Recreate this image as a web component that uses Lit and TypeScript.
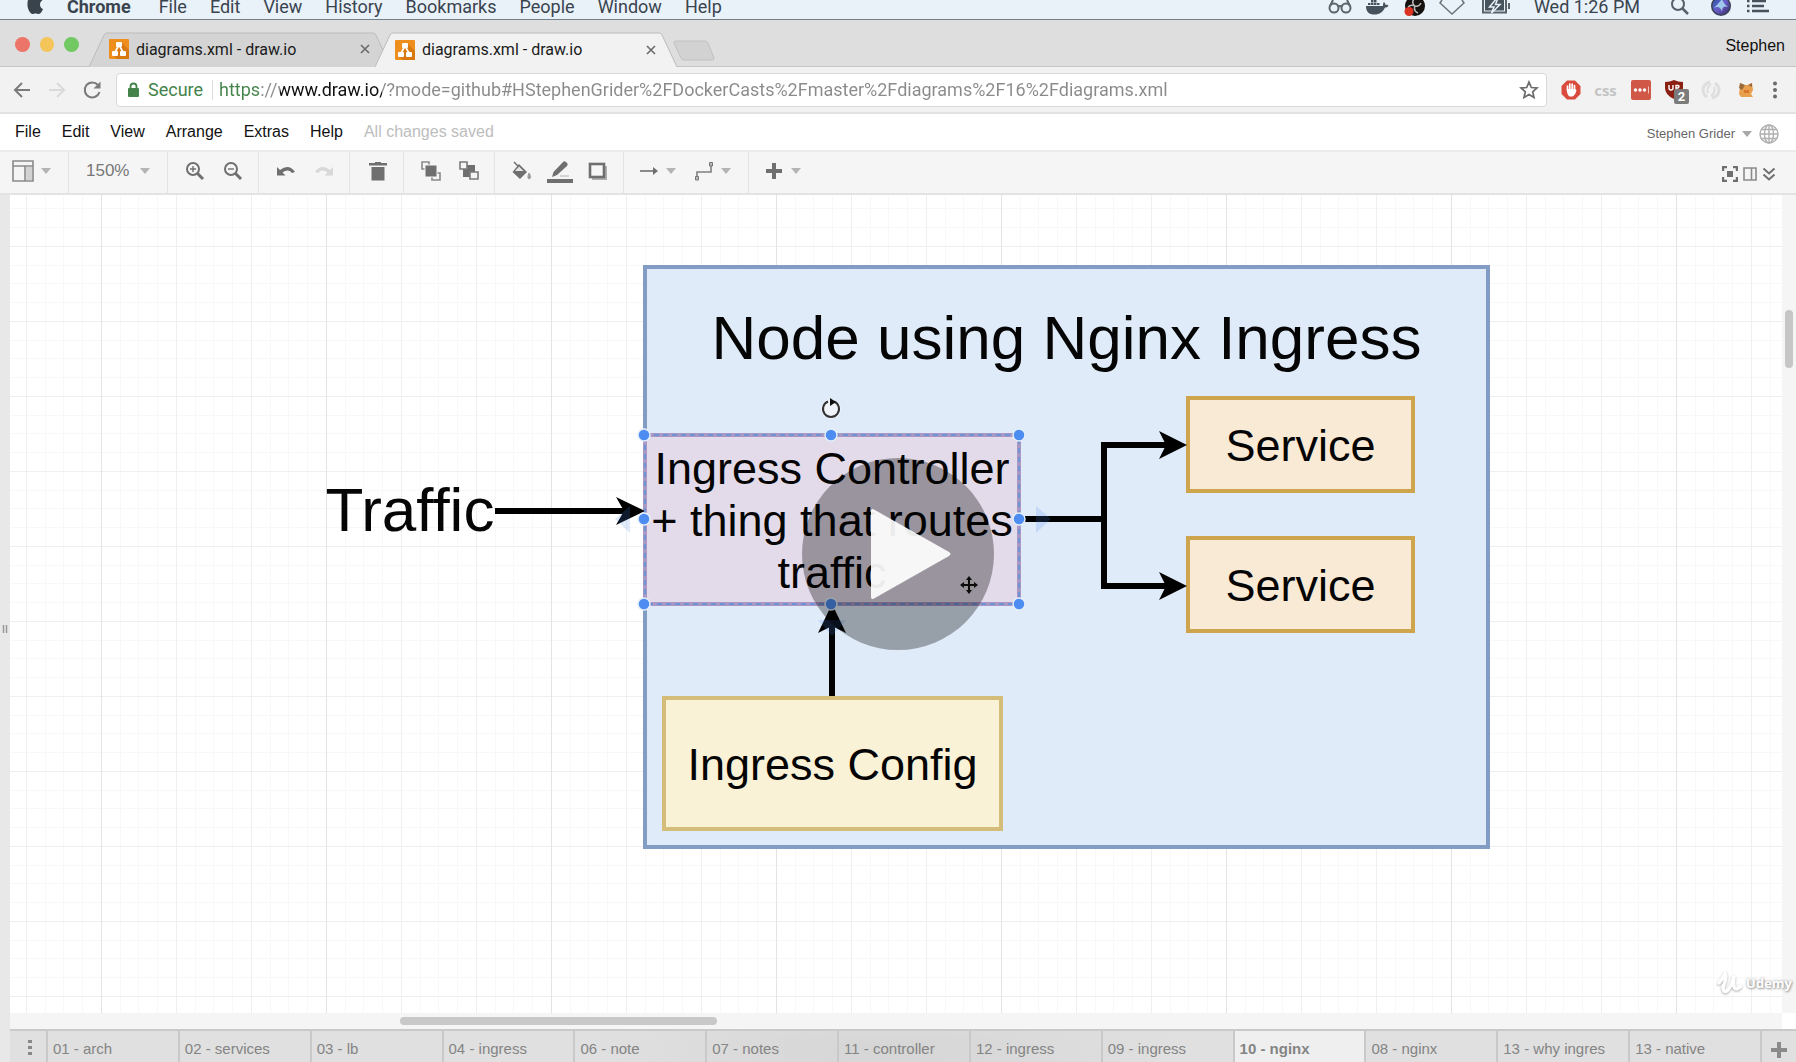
import { LitElement, html, svg, css } from "lit";
import { customElement, property, state } from "lit/decorators.js";
import { classMap } from "lit/directives/class-map.js";
import { styleMap } from "lit/directives/style-map.js";

const caret = html`<svg class="caret" width="10" height="6" viewBox="0 0 10 6" aria-hidden="true"><path d="M0 0H10L5 6Z" fill="currentColor" /></svg>`;

const favicon = html`<svg width="20" height="20" viewBox="0 0 20 20" aria-hidden="true">
  <rect width="20" height="20" rx="1" fill="#ee8e1c" />
  <path d="M13 4L20 11V20H8L5 17L10 9Z" fill="#d9780f" />
  <path d="M10 6L5.500 14M10 6L14.500 14" stroke="#fff" stroke-width="1.600" />
  <rect x="7" y="3" width="6" height="5" rx="1" fill="#fff" />
  <rect x="3" y="12" width="6" height="5" rx="1" fill="#fff" />
  <rect x="11" y="12" width="6" height="5" rx="1" fill="#fff" />
</svg>`;

@customElement("mac-menu-bar")
class MacMenuBar extends LitElement {
  static styles = css`
    :host {
      display: flex;
      justify-content: space-between;
      align-items: flex-start;
      height: 19px;
      overflow: hidden;
      background: #e9f1f9;
      border-bottom: 1px solid #74818b;
      color: #3a444e;
      font: 18px/14px Roboto, sans-serif;
    }
    .menus { display: flex; align-items: flex-start; gap: 23px; padding-left: 27px; }
    .status { display: flex; align-items: flex-start; gap: 13px; padding-right: 26px; }
    button { all: unset; white-space: nowrap; }
    .app { font-weight: 700; margin-right: 5px; }
    svg { display: block; }
    .battery { margin-left: 3px; }
    .clock { padding: 0 17px 0 10px; white-space: nowrap; }
    .siri { margin: 0 2px 0 8px; }
  `;
  render() {
    return html`
      <nav class="menus" aria-label="System menu">
        <svg width="17" height="15" viewBox="0 0 17 15" aria-hidden="true">
          <path d="M1 0H15.500C13.500 1.500 13 3 13 4.500C13 7 14.500 8.500 16 9C15 12 13 14 11.500 14C10.500 14 10 13.400 8.500 13.400C7 13.400 6.500 14 5.500 14C3.500 14 0.500 9.500 0.500 5C0.500 3 0.500 1.500 1 0Z" fill="#39434c" />
        </svg>
        <button class="app">Chrome</button>
        ${["File", "Edit", "View", "History", "Bookmarks", "People", "Window", "Help"].map((m) => html`<button>${m}</button>`)}
      </nav>
      <div class="status">
        <svg width="24" height="15" viewBox="0 0 24 15" fill="none" stroke="#5b656d" stroke-width="2" aria-hidden="true">
          <circle cx="6" cy="8" r="4.500" /><circle cx="18" cy="8" r="4.500" /><path d="M10 7Q12 5 14 7M2 6L5 0M22 6L19 0" />
        </svg>
        <svg width="24" height="16" viewBox="0 0 24 16" fill="#46525c" aria-hidden="true">
          <path d="M1 6H18C18 4 18 3 19 2C20 3 20.500 4 20.500 5C21.500 4.500 23 5 23.500 5.500C23 7 21.500 7.500 20 7.500C18 12 14.500 14.500 9.500 14.500C4 14.500 1 12 1 6Z" />
          <path d="M3 3H5.500V5H3ZM6 3H8.500V5H6ZM9 3H11.500V5H9ZM12 3H14.500V5H12ZM6 0H8.500V2.500H6ZM9 0H11.500V2.500H9Z" />
        </svg>
        <svg width="24" height="17" viewBox="0 0 24 17" aria-hidden="true">
          <circle cx="13" cy="6" r="10" fill="#14110f" />
          <path d="M12 -1Q9 3 13 6Q17 7 19 3M13 6Q11 11 16 13M13 6Q9 4 6 7" stroke="#b9b9b9" stroke-width="1.500" fill="none" />
          <circle cx="7" cy="11.500" r="4.500" fill="#dd3323" />
        </svg>
        <svg width="26" height="16" viewBox="0 0 26 16" aria-hidden="true"><path d="M3 0L1 3L13 14L25 3L23 0" fill="none" stroke="#6a747c" stroke-width="1.500" /></svg>
        <svg class="battery" width="30" height="16" viewBox="0 0 30 16" aria-hidden="true">
          <path d="M2 0V12.500H25V0M28 3V9" stroke="#58636c" stroke-width="2" fill="none" />
          <path d="M4 0H23V10.500H4Z" fill="#46525c" />
          <path d="M16 -2L8.500 7H13L10.500 13L19 4.500H14.500L17 -2Z" fill="#46525c" stroke="#e9f1f9" stroke-width="1.500" />
        </svg>
        <span class="clock">Wed 1:26 PM</span>
        <svg width="20" height="16" viewBox="0 0 20 16" aria-hidden="true"><circle cx="8" cy="4" r="6" fill="none" stroke="#56606a" stroke-width="2" /><path d="M12.500 8.500L18 14" stroke="#56606a" stroke-width="2.500" /></svg>
        <svg class="siri" width="20" height="17" viewBox="0 0 20 17" aria-hidden="true">
          <defs><linearGradient id="s" x1="0" x2="1" y1="0" y2="1"><stop offset="0" stop-color="#2558a8" /><stop offset=".5" stop-color="#6a5cc8" /><stop offset="1" stop-color="#3a2c68" /></linearGradient></defs>
          <circle cx="10" cy="6" r="10" fill="#3c4257" /><circle cx="10" cy="6" r="8.500" fill="url(#s)" />
          <path d="M3 8Q8 3 11 -1Q12 3 17 7Q11 5 11 12Q9 5 3 8Z" fill="#a9dcf2" opacity=".85" />
        </svg>
        <svg width="24" height="14" viewBox="0 0 24 14" aria-hidden="true"><path d="M1 1H3.500M1 6H3.500M1 11H3.500M6 1H20M6 6H18M6 11H23" stroke="#46525c" stroke-width="2.500" /></svg>
      </div>
    `;
  }
}

@customElement("browser-chrome")
class BrowserChrome extends LitElement {
  @property() address = "";
  static styles = css`
    :host { display: block; font-family: Roboto, sans-serif; background: #dedede; }
    button { all: unset; display: flex; align-items: center; justify-content: center; }
    svg { display: block; flex: none; }
    .strip { display: flex; align-items: center; height: 46px; border-bottom: 1px solid #c6c6c6; padding-right: 11px; }
    .lights { display: flex; gap: 10px; padding: 2px 10px 0 15px; width: 64px; }
    .light { width: 15px; height: 15px; border-radius: 50%; }
    .red { background: #ec7468; }
    .amber { background: #f4c558; }
    .green { background: #72c963; }
    .tab {
      position: relative; display: flex; align-items: center; gap: 7px;
      box-sizing: border-box; width: 302px; height: 35px; margin: 12px -16px 0 0; padding: 0 20px;
      font-size: 16px; color: #1b1b1b;
    }
    .tab.active { z-index: 1; margin-bottom: -1px; }
    .shape { position: absolute; inset: 0; width: 100%; height: 100%; }
    .tab > :not(.shape) { position: relative; }
    .title { flex: 1; white-space: nowrap; }
    .newtab { margin: 16px auto 0 12px; }
    .profile { font: 16px "Liberation Sans", sans-serif; color: #111; padding-top: 5px; }
    .bar { display: flex; align-items: center; height: 45px; background: #f2f2f2; border-bottom: 2px solid #e2e2e2; padding-right: 9px; }
    .nav { display: flex; gap: 15px; padding: 0 14px 0 12px; }
    .box {
      flex: 1; min-width: 0; display: flex; align-items: center; height: 32px; margin-right: 6px; padding: 0 7px 0 10px;
      background: #fff; border: 1px solid #d9d9d9; border-radius: 4px;
    }
    .secure { color: #44834a; font-size: 18px; padding: 0 9px 0 8px; border-right: 1px solid #dcdcdc; line-height: 20px; }
    label { flex: 1; display: flex; }
    input {
      flex: 1; min-width: 0; border: 0; outline: 0; padding: 0 0 0 6px; font: 18px/24px Roboto, sans-serif;
      background-image: linear-gradient(90deg, #44834a 0 48px, #8a8a8a 48px 67px, #111 67px 169px, #8a8a8a 169px);
      background-clip: text; -webkit-background-clip: text; color: transparent;
    }
    .ext { width: 35px; height: 34px; }
    .dots { width: 24px; height: 34px; }
    .css { font: 700 15px "Open Sans", sans-serif; color: #c4c4c4; }
  `;
  private tab(active: boolean) {
    return html`<div class=${classMap({ tab: true, active })} role="tab" aria-selected=${active}>
      <svg class="shape" viewBox="0 0 302 35" preserveAspectRatio="none" aria-hidden="true">
        <path d="M0 35L15 3Q16 1 18 1H284Q286 1 287 3L302 35Z" fill=${active ? "#f2f2f2" : "#d4d4d4"} />
        <path d="M0 35L15 3Q16 1 18 1H284Q286 1 287 3L302 35" fill="none" stroke="#bcbcbc" />
      </svg>
      ${favicon}<span class="title">diagrams.xml - draw.io</span>
      <button aria-label="Close tab"><svg width="12" height="12" viewBox="0 0 12 12"><path d="M2 2L10 10M10 2L2 10" stroke="#6a6a6a" stroke-width="1.600" /></svg></button>
    </div>`;
  }
  render() {
    return html`
      <div class="strip">
        <div class="lights"><span class="light red"></span><span class="light amber"></span><span class="light green"></span></div>
        ${this.tab(false)}${this.tab(true)}
        <button class="newtab" aria-label="New tab"><svg width="42" height="22" viewBox="0 0 42 22"><path d="M3 1H32Q34 1 35 3L41 18Q41 20 39 20H11Q9 20 8 18L1 3Q1 1 3 1Z" fill="#d2d2d2" stroke="#c0c0c0" /></svg></button>
        <span class="profile">Stephen</span>
      </div>
      <div class="bar">
        <div class="nav">
          <button aria-label="Back"><svg width="20" height="20" viewBox="0 0 20 20" fill="none" stroke="#7b7b7b" stroke-width="2"><path d="M18 10H3M10 3L3 10L10 17" /></svg></button>
          <button aria-label="Forward"><svg width="20" height="20" viewBox="0 0 20 20" fill="none" stroke="#dadada" stroke-width="2"><path d="M2 10H17M10 3L17 10L10 17" /></svg></button>
          <button aria-label="Reload"><svg width="20" height="20" viewBox="0 0 20 20"><path d="M16 5A7.500 7.500 0 1 0 17.500 12" fill="none" stroke="#7b7b7b" stroke-width="2" /><path d="M18.500 1.500V8.500H11.500Z" fill="#7b7b7b" /></svg></button>
        </div>
        <div class="box">
          <svg width="13" height="16" viewBox="0 0 13 16"><rect x="1" y="6" width="11" height="9" rx="1" fill="#44834a" /><path d="M3.500 7V4.500A3 3 0 0 1 9.500 4.500V7" fill="none" stroke="#44834a" stroke-width="1.800" /></svg>
          <span class="secure">Secure</span>
          <label><input aria-label="Address" .value=${this.address} spellcheck="false" /></label>
          <button aria-label="Bookmark"><svg width="20" height="20" viewBox="0 0 20 20"><path d="M10 2L12.300 7.500L18 8L13.700 11.800L15 17.500L10 14.500L5 17.500L6.300 11.800L2 8L7.700 7.500Z" fill="none" stroke="#6b6b6b" stroke-width="1.700" /></svg></button>
        </div>
        <button class="ext" aria-label="AdBlock"><svg width="20" height="20" viewBox="0 0 20 20"><path d="M6 0.500H14L19.500 6V14L14 19.500H6L0.500 14V6Z" fill="#d94c3d" /><path d="M6.500 10V6M8.800 10V4M11.200 10V4M13.500 10V5.500" stroke="#fff" stroke-width="1.700" stroke-linecap="round" /><path d="M5.700 9H14.300L15.500 10.500Q14 15.500 11.500 16.500H8.500Q6 15 5.700 9Z" fill="#fff" /></svg></button>
        <button class="ext css">css</button>
        <button class="ext" aria-label="Password manager"><svg width="20" height="20" viewBox="0 0 20 20"><rect width="20" height="20" rx="2" fill="#cf5847" /><circle cx="4.500" cy="10" r="1.700" fill="#fff" /><circle cx="9" cy="10" r="1.700" fill="#fff" /><circle cx="13.500" cy="10" r="1.700" fill="#fff" /><path d="M17.500 6.500V13.500" stroke="#f2c4bd" /></svg></button>
        <button class="ext" aria-label="uBlock"><svg width="26" height="28" viewBox="0 0 26 28"><path d="M2 6Q7 6 11 4Q15 6 20 6V12Q20 19 11 23Q2 19 2 12Z" fill="#8c1f14" /><path d="M6 9V12Q6 14 8 14Q10 14 10 12V9M13 15V9.500H15Q17 10 15 12H13" fill="none" stroke="#fff" stroke-width="1.400" /><rect x="11" y="13" width="15" height="15" rx="2" fill="#7b7b7b" /><text x="18.500" y="25" text-anchor="middle" font-family="Roboto" font-weight="700" font-size="13" fill="#fff">2</text></svg></button>
        <button class="ext" aria-label="Extension"><svg width="22" height="20" viewBox="0 0 22 20" fill="none" stroke="#dedede"><path d="M10 2Q3 4 3 10Q3 14 7 17M12 18Q19 16 19 10Q19 6 15 3" stroke-width="3" /><path d="M11 4Q6 8 8 13M11 16Q16 12 14 7" stroke-width="2" /></svg></button>
        <button class="ext" aria-label="Extension"><svg width="18" height="18" viewBox="0 0 18 18"><path d="M3 2L7 4H11L15 2L16 9L14 13L16 16H4L2 13Q3 8 3 2Z" fill="#e9a04c" /><path d="M3 2L8 4L5 9L2 7ZM11 4L15 2V6Z" fill="#9a6a3c" /><path d="M7 9H12V12H7Z" fill="#d6792a" /></svg></button>
        <button class="dots" aria-label="Menu"><svg width="6" height="18" viewBox="0 0 6 18" fill="#6b6b6b"><circle cx="3" cy="2.500" r="2" /><circle cx="3" cy="9" r="2" /><circle cx="3" cy="15.500" r="2" /></svg></button>
      </div>
    `;
  }
}

const icon = (w: number, h: number, body: unknown) =>
  html`<svg width=${w} height=${h} viewBox="0 0 ${w} ${h}" aria-hidden="true">${body}</svg>`;

const G = "#6f6f6f";
const icons = {
  sidebar: icon(22, 22, svg`<path d="M1 1H21V21H1ZM1 6H21M13 6V21" fill="none" stroke="#8a8a8a" stroke-width="1.600"/><rect x="14" y="7" width="6" height="13" fill="#d2d2d2"/>`),
  zoomIn: icon(20, 20, svg`<circle cx="8" cy="8" r="6" fill="none" stroke=${G} stroke-width="2"/><path d="M8 5V11M5 8H11" stroke=${G} stroke-width="1.400"/><path d="M12.500 12.500L18 18" stroke=${G} stroke-width="3"/>`),
  zoomOut: icon(20, 20, svg`<circle cx="8" cy="8" r="6" fill="none" stroke=${G} stroke-width="2"/><path d="M5 8H11" stroke=${G} stroke-width="1.400"/><path d="M12.500 12.500L18 18" stroke=${G} stroke-width="3"/>`),
  undo: icon(20, 16, svg`<path d="M1 4V12.500H9.500L6.500 9.500Q12 5.500 16 10L19 9Q13 0 4 7Z" fill=${G}/>`),
  redo: icon(20, 16, svg`<path d="M19 4V12.500H10.500L13.500 9.500Q8 5.500 4 10L1 9Q7 0 16 7Z" fill="#d8d8d8"/>`),
  trash: icon(20, 20, svg`<path d="M1 2H7V1H13V2H19V4.500H1ZM3.500 6H16.500V19.500H3.500Z" fill=${G}/>`),
  front: icon(22, 20, svg`<path d="M2 1H9V8H2ZM12 12H20V19H12Z" fill="none" stroke="#8a8a8a" stroke-width="1.600"/><rect x="5" y="4" width="12" height="12" fill=${G} stroke="#f5f5f5"/>`),
  back: icon(22, 20, svg`<rect x="5" y="4" width="12" height="12" fill=${G}/><path d="M2 1H9V8H2ZM12 11H20V18H12Z" fill="#f5f5f5" stroke="#7a7a7a" stroke-width="1.600"/>`),
  fill: icon(22, 20, svg`<path d="M3 1L8 6" stroke=${G} stroke-width="1.500"/><path d="M8 3L16 11L9 18L1.500 11Z" fill=${G}/><path d="M8 5.500L12.500 10H4Z" fill="#e5e5e5"/><path d="M18 12Q21 16 18.500 18Q15.500 17.500 18 12Z" fill="#9b9b9b" stroke="#9b9b9b"/>`),
  line: icon(28, 24, svg`<path d="M6 18L7.500 13L17 3Q18 1.500 20 3L21.500 4.500Q22 6 21 7L11 16Z" fill=${G}/><path d="M14 17H23" stroke="#c8c8c8" stroke-width="1.500"/><rect x="1" y="20" width="26" height="4" fill=${G}/>`),
  shadow: icon(20, 20, svg`<rect x="4" y="5" width="15" height="14" fill="#b0b0b0"/><rect x="2" y="3" width="14" height="13" fill="#f7f7f7" stroke=${G} stroke-width="2.600"/>`),
  arrow: icon(20, 20, svg`<path d="M1 10H15" stroke=${G} stroke-width="1.600"/><path d="M14 6L19 10L14 14Z" fill=${G}/>`),
  elbow: icon(20, 20, svg`<path d="M3 17V11H17V4" fill="none" stroke="#808080" stroke-width="1.600"/><path d="M1.500 15.500H4.500V19H1.500ZM15.500 1.500H18.500V5H15.500Z" fill="#bbb" stroke="#777"/>`),
  plus: icon(20, 20, svg`<path d="M10 2V18M2 10H18" stroke=${G} stroke-width="4"/>`),
};

@customElement("editor-header")
class EditorHeader extends LitElement {
  static styles = css`
    :host { display: block; font: 16px "Liberation Sans", Arial, sans-serif; }
    button { all: unset; display: flex; align-items: center; justify-content: center; white-space: nowrap; }
    svg { display: block; flex: none; }
    .menus { display: flex; align-items: center; height: 36px; padding: 0 17px 0 15px; gap: 21px; background: #fff; border-bottom: 2px solid #ebebeb; color: #111; }
    .saved { color: #bdbdbd; }
    .user { margin-left: auto; display: flex; align-items: center; gap: 7px; font-size: 13px; color: #666; padding-top: 3px; }
    .user button { gap: 7px; }
    .user .caret { color: #a8a8a8; }
    .tools { display: flex; height: 41px; background: #f5f5f5; border-bottom: 2px solid #e3e3e3; padding-right: 20px; }
    .group { display: flex; align-items: center; padding: 0 6px 4px 8px; border-right: 1px solid #e4e4e4; }
    .group:first-child { padding: 0 8px 4px 5px; }
    .group.last { border-right: 0; }
    .tool { width: 38px; height: 34px; }
    .tool.lone { width: 39px; }
    .drop { justify-content: flex-start; box-sizing: border-box; width: 55px; height: 34px; padding-left: 7px; gap: 7px; }
    .caret { color: #b4b4b4; }
    .zoom { display: flex; align-items: center; padding: 0 11px 0 9px; }
    select { appearance: none; border: 0; background: none; padding: 0; width: 54px; font: inherit; font-size: 17px; color: #777; outline: 0; }
    .view { margin-left: auto; display: flex; align-items: center; gap: 5px; padding-top: 2px; }
  `;
  render() {
    const tool = (label: string, i: unknown, lone = false) => html`<button class=${classMap({ tool: true, lone })} aria-label=${label}>${i}</button>`;
    const drop = (label: string, i: unknown) => html`<button class="drop" aria-label=${label}>${i}${caret}</button>`;
    return html`
      <nav class="menus" aria-label="Editor menu">
        ${["File", "Edit", "View", "Arrange", "Extras", "Help"].map((m) => html`<button>${m}</button>`)}
        <span class="saved">All changes saved</span>
        <div class="user">
          <button>Stephen Grider ${caret}</button>
          <button aria-label="Language">
            <svg width="20" height="20" viewBox="0 0 20 20" fill="none" stroke="#b0b0b0" stroke-width="1.400"><circle cx="10" cy="10" r="9" /><ellipse cx="10" cy="10" rx="4.500" ry="9" /><path d="M10 1V19M1 10H19M2.500 5.500H17.500M2.500 14.500H17.500" /></svg>
          </button>
        </div>
      </nav>
      <div class="tools" role="toolbar">
        <div class="group">${drop("Panels", icons.sidebar)}</div>
        <div class="group"><label class="zoom"><select aria-label="Zoom"><option>150%</option></select>${caret}</label></div>
        <div class="group">${tool("Zoom in", icons.zoomIn)}${tool("Zoom out", icons.zoomOut)}</div>
        <div class="group">${tool("Undo", icons.undo)}${tool("Redo", icons.redo)}</div>
        <div class="group">${tool("Delete", icons.trash, true)}</div>
        <div class="group">${tool("To front", icons.front)}${tool("To back", icons.back)}</div>
        <div class="group">${tool("Fill colour", icons.fill)}${tool("Line colour", icons.line)}${tool("Shadow", icons.shadow)}</div>
        <div class="group">${drop("Connection", icons.arrow)}${drop("Waypoints", icons.elbow)}</div>
        <div class="group last">${drop("Insert", icons.plus)}</div>
        <div class="view">
          <button aria-label="Fullscreen"><svg width="16" height="16" viewBox="0 0 16 16"><path d="M1 5V1H5M11 1H15V5M15 11V15H11M5 15H1V11" fill="none" stroke=${G} stroke-width="2.400" /><rect x="5" y="5" width="6" height="6" fill=${G} /></svg></button>
          <button aria-label="Format panel"><svg width="14" height="14" viewBox="0 0 14 14"><path d="M1 1H13V13H1ZM8.500 1V13" fill="none" stroke="#8a8a8a" stroke-width="1.600" /></svg></button>
          <button aria-label="Collapse"><svg width="14" height="14" viewBox="0 0 14 14"><path d="M1.500 1.500L7 6.500L12.500 1.500M1.500 7.500L7 12.500L12.500 7.500" fill="none" stroke=${G} stroke-width="2" /></svg></button>
        </div>
      </div>
    `;
  }
}

interface DiagramNode { text: string; x: number; y: number; w: number; h: number; kind: string }

const nodes: DiagramNode[] = [
  { text: "Node using Nginx Ingress", x: 633, y: 70, w: 847, h: 584, kind: "host" },
  { text: "Traffic", x: 314, y: 279, w: 172, h: 72, kind: "label" },
  { text: "Service", x: 1176, y: 201, w: 229, h: 97, kind: "service" },
  { text: "Service", x: 1176, y: 341, w: 229, h: 97, kind: "service" },
  { text: "Ingress Config", x: 652, y: 501, w: 341, h: 135, kind: "config" },
  { text: "Ingress Controller + thing that routes traffic", x: 633, y: 238, w: 378, h: 173, kind: "controller" },
];

const handles = [634, 821, 1009].flatMap((x) => [240, 324, 409].map((y) => ({ x, y }))).filter((p) => !(p.x === 821 && p.y === 324));

@customElement("diagram-canvas")
class DiagramCanvas extends LitElement {
  static styles = css`
    :host { display: block; position: relative; overflow: hidden; background: #fff; }
    .grid, .edges { position: absolute; inset: 0; width: 100%; height: 100%; }
    .node {
      position: absolute; box-sizing: border-box; display: flex; align-items: center; justify-content: center; padding-top: 3px;
      text-align: center; color: #050505; font: 45px/52px "Liberation Sans", Arial, sans-serif; border: 4px solid;
    }
    .host { align-items: flex-start; padding-top: 33px; font-size: 62px; line-height: 72px; background: #dfebf9; border-color: #839cc3; }
    .label { border: 0; padding-top: 0; font-size: 62px; line-height: 72px; }
    .service { background: #f9ead6; border-color: #cea54c; }
    .config { background: #faf2d6; border-color: #d3bd79; }
    .controller { background: #e3dbea; border-color: #aa98c4; }
    .label, .host { white-space: nowrap; }
  `;
  render() {
    return html`
      <svg class="grid" aria-hidden="true">
        <defs>
          <pattern id="g" width="225" height="75" x="16" y="51" patternUnits="userSpaceOnUse">
            <path d="M19.500 0V75M37.500 0V75M56.500 0V75M94.500 0V75M112.500 0V75M131.500 0V75M169.500 0V75M187.500 0V75M206.500 0V75M0 19.500H225M0 37.500H225M0 56.500H225" stroke="#f8f8f8" />
            <path d="M0.500 0V75M150.500 0V75M0 0.500H225" stroke="#efefef" />
            <path d="M75.500 0V75" stroke="#e4e4e4" />
          </pattern>
        </defs>
        <rect width="100%" height="100%" fill="url(#g)" />
      </svg>
      ${nodes.map((n) => html`<div class="node ${n.kind}" style=${styleMap({ left: `${n.x}px`, top: `${n.y}px`, width: `${n.w}px`, height: `${n.h}px` })}>${n.text}</div>`)}
      <svg class="edges" aria-hidden="true">
        <g fill="none" stroke="#000" stroke-width="6">
          <path d="M485 316H616M1010 324H1094M1156 250H1094V391H1156M822 501V428" />
        </g>
        <path d="M635 316L606 302L614 316L606 330ZM1177 250L1149 236L1156 250L1149 264ZM1177 391L1149 377L1156 391L1149 405ZM822 409L808 438L822 431L836 438Z" fill="#000" />
        <g fill="#4d8cf0">
          <path d="M620 311V338L605 324ZM1026 311V338L1041 324ZM808 425H836L822 441Z" opacity=".18" />
          <rect x="635" y="240" width="374" height="169" fill="none" stroke="#6f93d4" stroke-width="2" stroke-dasharray="5 4" />
          ${handles.map((p) => svg`<circle cx=${p.x} cy=${p.y} r="6" stroke="#e4eefb" stroke-width="1.500" />`)}
        </g>
        <circle cx="821" cy="214" r="10" fill="#f4f6f8" opacity=".8" />
        <path d="M824 206.500A8 8 0 1 1 818 206.500" fill="none" stroke="#333" stroke-width="2" />
        <path d="M820 203L826 207L820 211Z" fill="#111" />
        <path d="M959 380L969 390L959 400L949 390Z" fill="#d5d5d5" opacity=".55" />
        <path d="M959 384V396M953 390H965" stroke="#111" stroke-width="2" />
        <path d="M959 381L962 385H956ZM959 399L962 395H956ZM950 390L954 387V393ZM968 390L964 387V393Z" fill="#111" />
      </svg>
    `;
  }
}

@customElement("app-root")
class AppRoot extends LitElement {
  @state() private active = "10 - nginx";
  private pages = ["01 - arch", "02 - services", "03 - lb", "04 - ingress", "06 - note", "07 - notes", "11 - controller", "12 - ingress", "09 - ingress", "10 - nginx", "08 - nginx", "13 - why ingres", "13 - native"];
  static styles = css`
    :host { display: flex; flex-direction: column; position: relative; min-height: 100vh; overflow: hidden; background: #fff; font: 15px "Liberation Sans", Arial, sans-serif; }
    button { all: unset; }
    .work { flex: 1; display: flex; }
    .splitter { display: flex; align-items: center; justify-content: center; width: 10px; background: #e8e8e8; }
    .main { flex: 1; min-width: 0; display: flex; flex-direction: column; }
    .view { flex: 1; display: flex; }
    diagram-canvas { flex: 1; }
    .vbar { width: 14px; background: #f5f5f5; display: flex; justify-content: center; }
    .vthumb { width: 8px; height: 58px; margin-top: 115px; border-radius: 4px; background: #c6c6c6; }
    .hbar { display: flex; align-items: center; height: 16px; margin-right: 14px; background: #f5f5f5; }
    .hthumb { width: 317px; height: 8px; margin-left: 390px; border-radius: 4px; background: #c8c8c8; }
    .pages { display: flex; height: 31px; border-top: 2px solid #c9c9c9; background: radial-gradient(ellipse 300px 50px at 49% 60%, #d5d5d5, #e0e0e0); }
    .more { width: 36px; display: flex; align-items: center; justify-content: center; padding: 3px 0 0 3px; box-sizing: border-box; }
    .page { flex: 1; min-width: 0; box-sizing: border-box; padding: 5px 5px 0; border-left: 2px solid #c9c9c9; color: #848484; line-height: 26px; white-space: nowrap; overflow: hidden; }
    .page.active { background: #efefef; font-weight: 700; }
    .add { width: 36px; display: flex; align-items: center; justify-content: center; border-left: 2px solid #c9c9c9; padding-top: 6px; box-sizing: border-box; }
    .play { position: absolute; z-index: 2; top: 458px; left: calc(50% - 96px); width: 192px; height: 192px; border-radius: 50%; background: rgba(0, 0, 0, 0.32); }
    .mark { position: absolute; z-index: 2; right: 4px; bottom: 65px; display: flex; align-items: center; gap: 4px; color: #fff; font: 700 13px/28px "Open Sans", sans-serif; text-shadow: 0 0 3px #999, 1px 1px 2px #aaa; }
    .mark svg { filter: drop-shadow(0 1px 1px #aaa); }
  `;
  render() {
    return html`
      <mac-menu-bar></mac-menu-bar>
      <browser-chrome address="https://www.draw.io/?mode=github#HStephenGrider%2FDockerCasts%2Fmaster%2Fdiagrams%2F16%2Fdiagrams.xml"></browser-chrome>
      <editor-header></editor-header>
      <div class="work">
        <div class="splitter"><svg width="6" height="8" viewBox="0 0 6 8" aria-hidden="true"><path d="M1.500 0V8M4.500 0V8" stroke="#999" stroke-width="1.500" /></svg></div>
        <div class="main">
          <div class="view">
            <diagram-canvas></diagram-canvas>
            <div class="vbar"><div class="vthumb"></div></div>
          </div>
          <div class="hbar"><div class="hthumb"></div></div>
          <nav class="pages" aria-label="Pages">
            <button class="more" aria-label="Pages menu"><svg width="4" height="18" viewBox="0 0 4 18"><path d="M0 1H4V4H0ZM0 7H4V10H0ZM0 13H4V16H0Z" fill="#888" /></svg></button>
            ${this.pages.map((p) => html`<button class=${classMap({ page: true, active: p === this.active })} @click=${() => (this.active = p)}>${p}</button>`)}
            <button class="add" aria-label="Add page"><svg width="16" height="16" viewBox="0 0 16 16"><path d="M8 0V16M0 8H16" stroke="#8a8a8a" stroke-width="4" /></svg></button>
          </nav>
        </div>
      </div>
      <button class="play" aria-label="Play">
        <svg width="192" height="192" viewBox="0 0 192 192"><path d="M69 53Q69 50 72 51.500L147 94Q150 96 147 98L72 140.500Q69 142 69 139Z" fill="#fff" opacity=".92" /></svg>
      </button>
      <div class="mark">
        <svg width="25" height="24" viewBox="0 0 25 24" aria-hidden="true"><path d="M2 12Q7 6 8 2Q10 8 6 16Q6 22 10 20Q15 15 17 5Q16 12 17 16Q19 20 24 15" fill="none" stroke="#fff" stroke-width="3.500" stroke-linecap="round" /></svg>
        <span>Udemy</span>
      </div>
    `;
  }
}
